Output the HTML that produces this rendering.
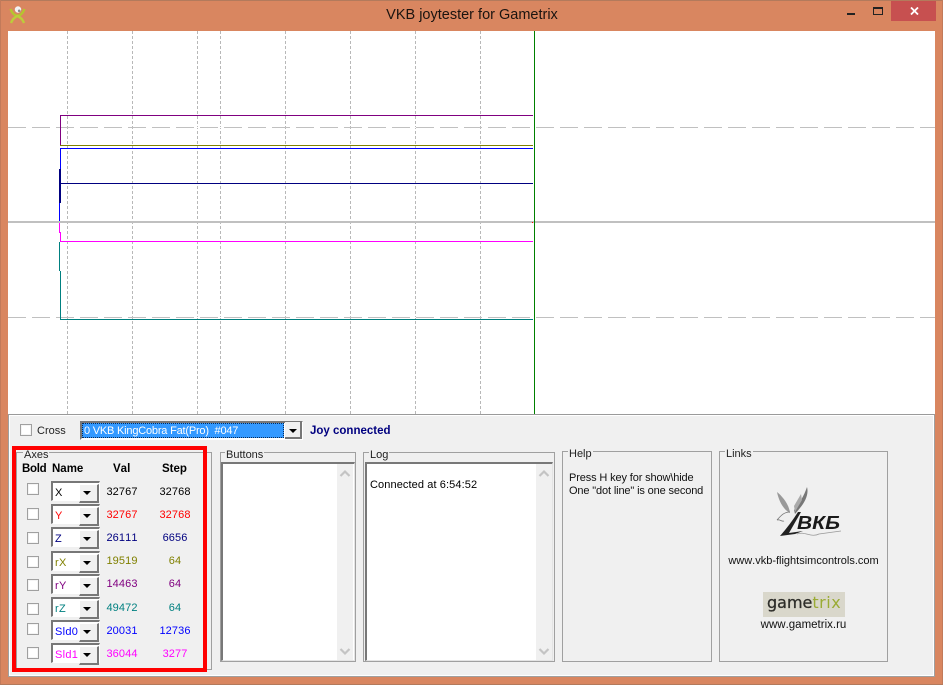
<!DOCTYPE html>
<html><head><meta charset="utf-8">
<style>
html,body{margin:0;padding:0;width:943px;height:685px;overflow:hidden;background:#d98660}
body{position:relative;font-family:"Liberation Sans",sans-serif;font-size:11px;color:#000;font-kerning:none}
div,span,svg{position:absolute;box-sizing:border-box}
.t{white-space:nowrap;line-height:13px}
.vd{width:1px;top:31px;height:383px;background:repeating-linear-gradient(to bottom,#b8b8b8 0 3px,#fff 3px 5px)}
.hd{left:8px;width:927px;height:1px;background:repeating-linear-gradient(to right,#c0c0c0 0 18px,#fff 18px 24px)}
.grp{border:1px solid #a0a0a0}
.lg{background:#f0f0f0;padding:0 1px;line-height:11px;height:11px;white-space:nowrap}
.cb{width:12px;height:12px;background:#fff;border:1px solid #a0a0a0;box-shadow:inset 0 0 0 1px #f4f4f4}
.co{left:51px;width:49px;height:20px;background:#fff;border-style:solid;border-width:2px 1px 1px 2px;border-color:#777 #fff #fff #777}
.co:after{content:"";position:absolute;right:0;top:-2px;width:2px;height:2px;background:#777}
.co i{position:absolute;right:0;top:1px;width:17px;height:16px;background:#f0f0f0;border-right:2px solid #777;border-bottom:2px solid #777;border-top:1px solid #fff;border-left:1px solid #fff}
.co i:after{content:"";position:absolute;left:3px;top:6px;border:4px solid transparent;border-top:4px solid #000;border-bottom:0}
.co b{position:absolute;left:2px;top:4px;font-weight:normal;line-height:13px;font-size:11px;letter-spacing:.3px}
.v{width:50px;text-align:center;line-height:13px;font-size:11px;letter-spacing:.1px}
.lb{background:#fff;border-top:2px solid #787878;border-left:2px solid #787878;border-bottom:1px solid #e4e4e4;border-right:1px solid #e4e4e4}
.sb{width:16px;background:#f0f0f0}
.th{font-weight:bold;line-height:13px;font-size:11.5px;white-space:nowrap}
</style></head>
<body>
<div style="left:0;top:0;width:943px;height:1px;background:#b37a5c"></div>
<div style="left:0;top:0;width:1px;height:685px;background:#c27a5a"></div>
<div style="left:942px;top:0;width:1px;height:685px;background:#c27a5a"></div>
<div style="left:0;top:684px;width:943px;height:1px;background:#b37a5c"></div>

<svg style="left:9px;top:5px" width="18" height="20" viewBox="0 0 18 20">
<path d="M1.500 4 C3 8 5.500 10.500 8.500 11 C11.500 10.500 14 8 15.500 4" fill="none" stroke="#b4c62e" stroke-width="2.400"/>
<path d="M2 18 C3.500 14 6 12 8.500 11 C11 12 13.500 14 15 18" fill="none" stroke="#bccd3a" stroke-width="2.400"/>
<circle cx="9" cy="4.500" r="3.200" fill="#f2f2f2"/><circle cx="10.200" cy="5.800" r="1.300" fill="#888"/>
</svg>
<div class="t" style="left:300px;width:344px;top:7px;text-align:center;font-size:14.500px;line-height:16px;color:#1b1410">VKB joytester for Gametrix</div>
<div style="left:847px;top:13px;width:8px;height:2px;background:#222"></div>
<div style="left:873px;top:7px;width:10px;height:8px;border:1px solid #222;border-top-width:2px"></div>
<div style="left:891px;top:1px;width:45px;height:20px;background:#c75050"></div>
<svg style="left:910px;top:7px" width="9" height="8" viewBox="0 0 9 8"><path d="M1 0.500 L8 7.500 M8 0.500 L1 7.500" stroke="#fff" stroke-width="1.800"/></svg>

<!-- canvas -->
<div style="left:8px;top:31px;width:927px;height:383px;background:#fff"></div>
<div class="vd" style="left:67px"></div><div class="vd" style="left:132px"></div><div class="vd" style="left:197px"></div><div class="vd" style="left:220px"></div><div class="vd" style="left:285px"></div><div class="vd" style="left:350px"></div><div class="vd" style="left:415px"></div><div class="vd" style="left:480px"></div>
<div class="hd" style="top:127px"></div><div class="hd" style="top:317px"></div>
<div style="left:8px;top:221px;width:927px;height:2px;background:#c0c0c0"></div>
<div style="left:534px;top:31px;width:1px;height:383px;background:#008000"></div>
<div style="left:532px;top:222px;width:1px;height:1px;background:#f00"></div>

<div style="left:60px;top:115px;width:473px;height:1px;background:#800080"></div>
<div style="left:60px;top:115px;width:1px;height:30px;background:#800080"></div>
<div style="left:60px;top:145px;width:473px;height:1px;background:#808000"></div>
<div style="left:60px;top:148px;width:473px;height:1px;background:#0000ff"></div>
<div style="left:60px;top:148px;width:1px;height:21px;background:#0000ff"></div>
<div style="left:59px;top:169px;width:1px;height:52px;background:#0000ff"></div>
<div style="left:59px;top:169px;width:2px;height:34px;background:#000080"></div>
<div style="left:60px;top:183px;width:473px;height:1px;background:#000080"></div>
<div style="left:59px;top:223px;width:1px;height:10px;background:#ff00ff"></div>
<div style="left:60px;top:232px;width:1px;height:10px;background:#ff00ff"></div>
<div style="left:60px;top:241px;width:473px;height:1px;background:#ff00ff"></div>
<div style="left:59px;top:242px;width:1px;height:29px;background:#008080"></div>
<div style="left:60px;top:271px;width:1px;height:48px;background:#008080"></div>
<div style="left:60px;top:319px;width:473px;height:1px;background:#008080"></div>

<!-- panel -->
<div style="left:8px;top:414px;width:927px;height:263px;background:#f0f0f0;border:1px solid #a0a0a0;border-top-color:#9a9a9a;box-shadow:inset 0 0 0 1px #fff"></div>

<div class="cb" style="left:20px;top:424px"></div>
<div class="t" style="left:37px;top:425px;font-size:11px;color:#222">Cross</div>
<div style="left:80px;top:421px;width:223px;height:19px;background:#fff;border:2px solid;border-color:#777 #fff #fff #777"></div>
<div style="left:82px;top:423px;width:202px;height:15px;background:#3399ff;border:1px dotted #0a2a55"></div>
<div class="t" style="left:84px;top:425px;color:#fff;font-size:11px;letter-spacing:-.2px">0 VKB KingCobra Fat(Pro)&nbsp; #047</div>
<div style="left:285px;top:422px;width:17px;height:17px;background:#f0f0f0;border-right:2px solid #777;border-bottom:2px solid #777"></div>
<div style="left:289px;top:429px;width:0;height:0;border:4px solid transparent;border-top:4px solid #000;border-bottom:0"></div>
<div class="t" style="left:310px;top:425px;font-weight:bold;color:#000080;font-size:11.500px">Joy connected</div>

<!-- axes -->
<div class="grp" style="left:16px;top:452px;width:196px;height:218px"></div>
<div class="lg" style="left:23px;top:450px;color:#222">Axes</div>
<div class="th" style="left:22px;top:463px;letter-spacing:-.3px">Bold</div>
<div class="th" style="left:52px;top:463px">Name</div>
<div class="th" style="left:113px;top:463px">Val</div>
<div class="th" style="left:162px;top:463px">Step</div>

<div class="cb" style="left:27px;top:483px"></div>
<div class="cb" style="left:27px;top:508px"></div>
<div class="cb" style="left:27px;top:532px"></div>
<div class="cb" style="left:27px;top:556px"></div>
<div class="cb" style="left:27px;top:579px"></div>
<div class="cb" style="left:27px;top:603px"></div>
<div class="cb" style="left:27px;top:623px"></div>
<div class="cb" style="left:27px;top:647px"></div>

<div class="co" style="top:481px"><b style="color:#000">X</b><i></i></div>
<div class="co" style="top:504px"><b style="color:#f00">Y</b><i></i></div>
<div class="co" style="top:527px"><b style="color:#000080">Z</b><i></i></div>
<div class="co" style="top:551px"><b style="color:#808000">rX</b><i></i></div>
<div class="co" style="top:574px"><b style="color:#800080">rY</b><i></i></div>
<div class="co" style="top:597px"><b style="color:#008080">rZ</b><i></i></div>
<div class="co" style="top:620px"><b style="color:#00f">Sld0</b><i></i></div>
<div class="co" style="top:643px"><b style="color:#f0f">Sld1</b><i></i></div>

<div class="v" style="left:97px;top:486px;color:#000">32767</div><div class="v" style="left:150px;top:486px;color:#000">32768</div>
<div class="v" style="left:97px;top:509px;color:#f00">32767</div><div class="v" style="left:150px;top:509px;color:#f00">32768</div>
<div class="v" style="left:97px;top:532px;color:#000080">26111</div><div class="v" style="left:150px;top:532px;color:#000080">6656</div>
<div class="v" style="left:97px;top:555px;color:#808000">19519</div><div class="v" style="left:150px;top:555px;color:#808000">64</div>
<div class="v" style="left:97px;top:578px;color:#800080">14463</div><div class="v" style="left:150px;top:578px;color:#800080">64</div>
<div class="v" style="left:97px;top:602px;color:#008080">49472</div><div class="v" style="left:150px;top:602px;color:#008080">64</div>
<div class="v" style="left:97px;top:625px;color:#00f">20031</div><div class="v" style="left:150px;top:625px;color:#00f">12736</div>
<div class="v" style="left:97px;top:648px;color:#f0f">36044</div><div class="v" style="left:150px;top:648px;color:#f0f">3277</div>

<div style="left:12px;top:446px;width:195px;height:226px;border:4px solid #f00"></div>

<!-- buttons -->
<div class="grp" style="left:220px;top:452px;width:136px;height:210px"></div>
<div class="lg" style="left:225px;top:450px;color:#222">Buttons</div>
<div class="lb" style="left:221px;top:462px;width:134px;height:199px"></div>
<div class="sb" style="left:337px;top:464px;height:196px"></div>
<svg style="left:337px;top:464px" width="16" height="196" viewBox="0 0 16 196"><path d="M3.500 12 L8 7.500 L12.500 12" fill="none" stroke="#c4c4c4" stroke-width="2.200"/><path d="M3.500 185 L8 189.500 L12.500 185" fill="none" stroke="#c4c4c4" stroke-width="2.200"/></svg>

<!-- log -->
<div class="grp" style="left:363px;top:452px;width:192px;height:210px"></div>
<div class="lg" style="left:369px;top:450px;color:#222">Log</div>
<div class="lb" style="left:365px;top:462px;width:188px;height:199px"></div>
<div class="sb" style="left:536px;top:464px;height:196px"></div>
<svg style="left:536px;top:464px" width="16" height="196" viewBox="0 0 16 196"><path d="M3.500 12 L8 7.500 L12.500 12" fill="none" stroke="#c4c4c4" stroke-width="2.200"/><path d="M3.500 185 L8 189.500 L12.500 185" fill="none" stroke="#c4c4c4" stroke-width="2.200"/></svg>
<div class="t" style="left:370px;top:479px;font-size:11px;letter-spacing:.1px">Connected at 6:54:52</div>

<!-- help -->
<div class="grp" style="left:562px;top:451px;width:150px;height:211px"></div>
<div class="lg" style="left:568px;top:449px;color:#222">Help</div>
<div class="t" style="left:569px;top:472px;font-size:11px;letter-spacing:-.13px;color:#111">Press H key for show\hide</div>
<div class="t" style="left:569px;top:485px;font-size:11px;letter-spacing:-.14px;color:#111">One "dot line" is one second</div>

<!-- links -->
<div class="grp" style="left:719px;top:451px;width:169px;height:211px"></div>
<div class="lg" style="left:725px;top:449px;color:#222">Links</div>

<svg style="left:773px;top:484px" width="72" height="60" viewBox="0 0 72 60">
<path d="M4 8 C9 12 16 20 17 29 C11 26 6 18 4 8Z" fill="#999"/>
<path d="M34 3 C36 10 32 18 27 24 L22 30 L21 26 C26 20 31 12 34 3Z" fill="#777"/>
<path d="M28 10 L29 16 L22 28 L21 22Z" fill="#aaa"/>
<path d="M17 28 C10 28 7 33 4 36 C7 35 9 38 11 37" fill="none" stroke="#777" stroke-width=".8"/>
<path d="M25 28 L28 28 L16 49 L30 47 L22 50 L7 52 C14 44 20 36 25 28Z" fill="#222"/>
<path d="M24 50 C32 47 38 54 46 50 L68 47" fill="none" stroke="#999" stroke-width=".8"/>
<text x="24" y="45" font-family="Liberation Sans" font-size="18" font-weight="bold" font-style="italic" textLength="43" lengthAdjust="spacingAndGlyphs" fill="#1a1a1a">ВКБ</text>
</svg>
<div class="t" style="left:719px;width:169px;top:555px;text-align:center;font-size:11px;color:#111">www.vkb-flightsimcontrols.com</div>

<div style="left:763px;top:592px;width:82px;height:25px;background:#d9d7cb"></div>
<div class="t" style="left:767px;top:592px;font-family:'DejaVu Sans',sans-serif;font-size:16px;line-height:22px;color:#2e2e2a;-webkit-text-stroke:.3px #2e2e2a">game<span style="position:static;color:#9aab35;letter-spacing:.5px;-webkit-text-stroke:0">trix</span></div>
<div class="t" style="left:719px;width:169px;top:619px;text-align:center;font-size:11.500px;color:#111">www.gametrix.ru</div>
</body></html>
